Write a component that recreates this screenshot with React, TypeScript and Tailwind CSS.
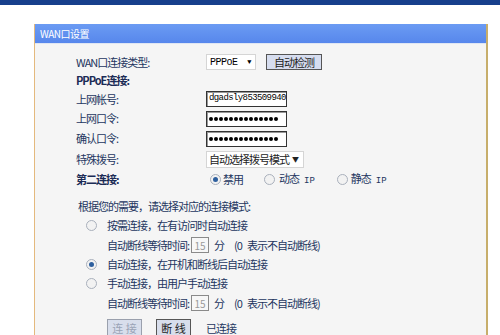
const cjk = { fontFamily: '"SimSun", "Noto Sans CJK SC", sans-serif' };
const mono = { fontFamily: '"Liberation Mono", "DejaVu Sans Mono", monospace' };

function Radio({ checked }: { checked?: boolean }) {
  return (
    <span className="inline-flex h-[11px] w-[11px] shrink-0 items-center justify-center rounded-full border border-[#a9b0bc] bg-[#f2f2f2]">
      {checked && <span className="h-[5px] w-[5px] rounded-full bg-[#2e5f9e]" />}
    </span>
  );
}

function Row({ label, bold, h = 'h-[20px]', children }: { label: string; bold?: boolean; h?: string; children?: React.ReactNode }) {
  return (
    <div className={`flex items-center ${h}`}>
      <div className={`w-[130px] shrink-0 ${bold ? 'font-bold text-[#1b2b55]' : 'text-[#24365f]'}`}>{label}</div>
      {children}
    </div>
  );
}

function Dots() {
  return (
    <div className="flex h-[16px] w-[81px] items-center gap-[1px] overflow-hidden border border-[#333] bg-white px-[2px] shadow-[inset_1px_1px_0_#999]">
      {Array.from({ length: 14 }).map((_, i) => (
        <span key={i} className="h-[4px] w-[4px] shrink-0 rounded-full bg-black" />
      ))}
    </div>
  );
}

function Wait() {
  return (
    <div className="flex h-[20px] items-center whitespace-nowrap pl-[31px] text-[#24365f]">
      <span>自动断线等待时间:</span>
      <span className="ml-[2px] flex h-[16px] w-[18px] items-center justify-center border border-[#8a8a8a] bg-[#f7f7f7] text-[10px] tracking-normal text-[#9a9a9a]">15</span>
      <span className="ml-[5px]">分</span>
      <span className="ml-[10px]">(0</span>
      <span className="ml-[5px]">表示不自动断线)</span>
    </div>
  );
}

export default function App() {
  return (
    <div className="h-[335px] w-[500px] overflow-hidden bg-white text-[11px] tracking-[-1px]" style={cjk}>
      <div className="h-[5px] bg-[#173f8c]" />
      <div className="ml-[34px] mt-[19px] w-[454px] border-l border-r-2 border-l-[#e4b97d] border-r-[#c7ae6b]">
        <div className="flex h-[19px] items-center bg-gradient-to-b from-[#6b9bf3] to-[#5787ec] pl-[5px] text-[10px] tracking-[-0.5px] text-white">
          WAN口设置
        </div>
        <div className="h-[1px] bg-[#dfe6f3]" />
        <div className="h-[400px] bg-[#f5f5f5] pl-[41px] pt-[8px]">
          <Row label="WAN口连接类型:">
            <div className="flex h-[16px] w-[50px] items-center justify-between border border-[#d5d5d5] bg-white pl-[3px] pr-[4px] text-[10px] tracking-[-0.5px]" style={mono}>
              <span>PPPoE</span>
              <span className="text-[7px]">▼</span>
            </div>
            <button className="ml-[10px] flex h-[16px] w-[56px] items-center justify-center border border-[#555] bg-[#d6ddef] text-[11px] text-[#222]">
              自动检测
            </button>
          </Row>
          <Row label="PPPoE连接:" bold h="h-[17px]" />
          <Row label="上网帐号:">
            <div className="flex h-[16px] w-[81px] items-center overflow-hidden whitespace-nowrap border border-[#333] bg-white pl-[2px] text-[9px] tracking-[-0.6px] text-black shadow-[inset_1px_1px_0_#999]" style={mono}>
              <span>dgadsly853509940</span>
            </div>
          </Row>
          <Row label="上网口令:" h="h-[19px]">
            <Dots />
          </Row>
          <Row label="确认口令:" h="h-[21px]">
            <Dots />
          </Row>
          <Row label="特殊拨号:">
            <div className="flex h-[17px] w-[98px] items-center justify-between whitespace-nowrap border border-[#d5d5d5] bg-white pl-[2px] pr-[5px] text-[11px] text-[#222]">
              <span>自动选择拨号模式</span>
              <span className="text-[7px]">▼</span>
            </div>
          </Row>
          <Row label="第二连接:" bold>
            <div className="flex items-center whitespace-nowrap pl-[4px] text-[#24365f]">
              <Radio checked />
              <span className="ml-[2px]">禁用</span>
              <span className="ml-[21px] flex"><Radio /></span>
              <span className="ml-[4px]">
                动态<span className="ml-[5px] text-[9px] tracking-normal" style={mono}>IP</span>
              </span>
              <span className="ml-[22px] flex"><Radio /></span>
              <span className="ml-[3px]">
                静态<span className="ml-[5px] text-[9px] tracking-normal" style={mono}>IP</span>
              </span>
            </div>
          </Row>
          <div className="mt-[7px] flex h-[20px] items-center pl-[2px] text-[#24365f]">根据您的需要，请选择对应的连接模式:</div>
          <div className="flex h-[19px] items-center pl-[10px] text-[#24365f]">
            <Radio />
            <span className="ml-[10px]">按需连接，在有访问时自动连接</span>
          </div>
          <Wait />
          <div className="flex h-[19px] items-center pl-[10px] text-[#24365f]">
            <Radio checked />
            <span className="ml-[10px]">自动连接，在开机和断线后自动连接</span>
          </div>
          <div className="flex h-[19px] items-center pl-[10px] text-[#24365f]">
            <Radio />
            <span className="ml-[10px]">手动连接，由用户手动连接</span>
          </div>
          <Wait />
          <div className="mt-[5px] flex h-[20px] items-center pl-[31px] text-[#24365f]">
            <button className="flex h-[18px] w-[35px] items-center justify-center border border-[#9aa0ad] bg-[#d8deec] text-[11px] tracking-normal text-[#9aa3b6]">连 接</button>
            <button className="ml-[14px] flex h-[18px] w-[35px] items-center justify-center border border-[#555] bg-[#d8deec] text-[11px] tracking-normal text-[#222]">断 线</button>
            <span className="ml-[15px]">已连接</span>
          </div>
        </div>
      </div>
    </div>
  );
}
